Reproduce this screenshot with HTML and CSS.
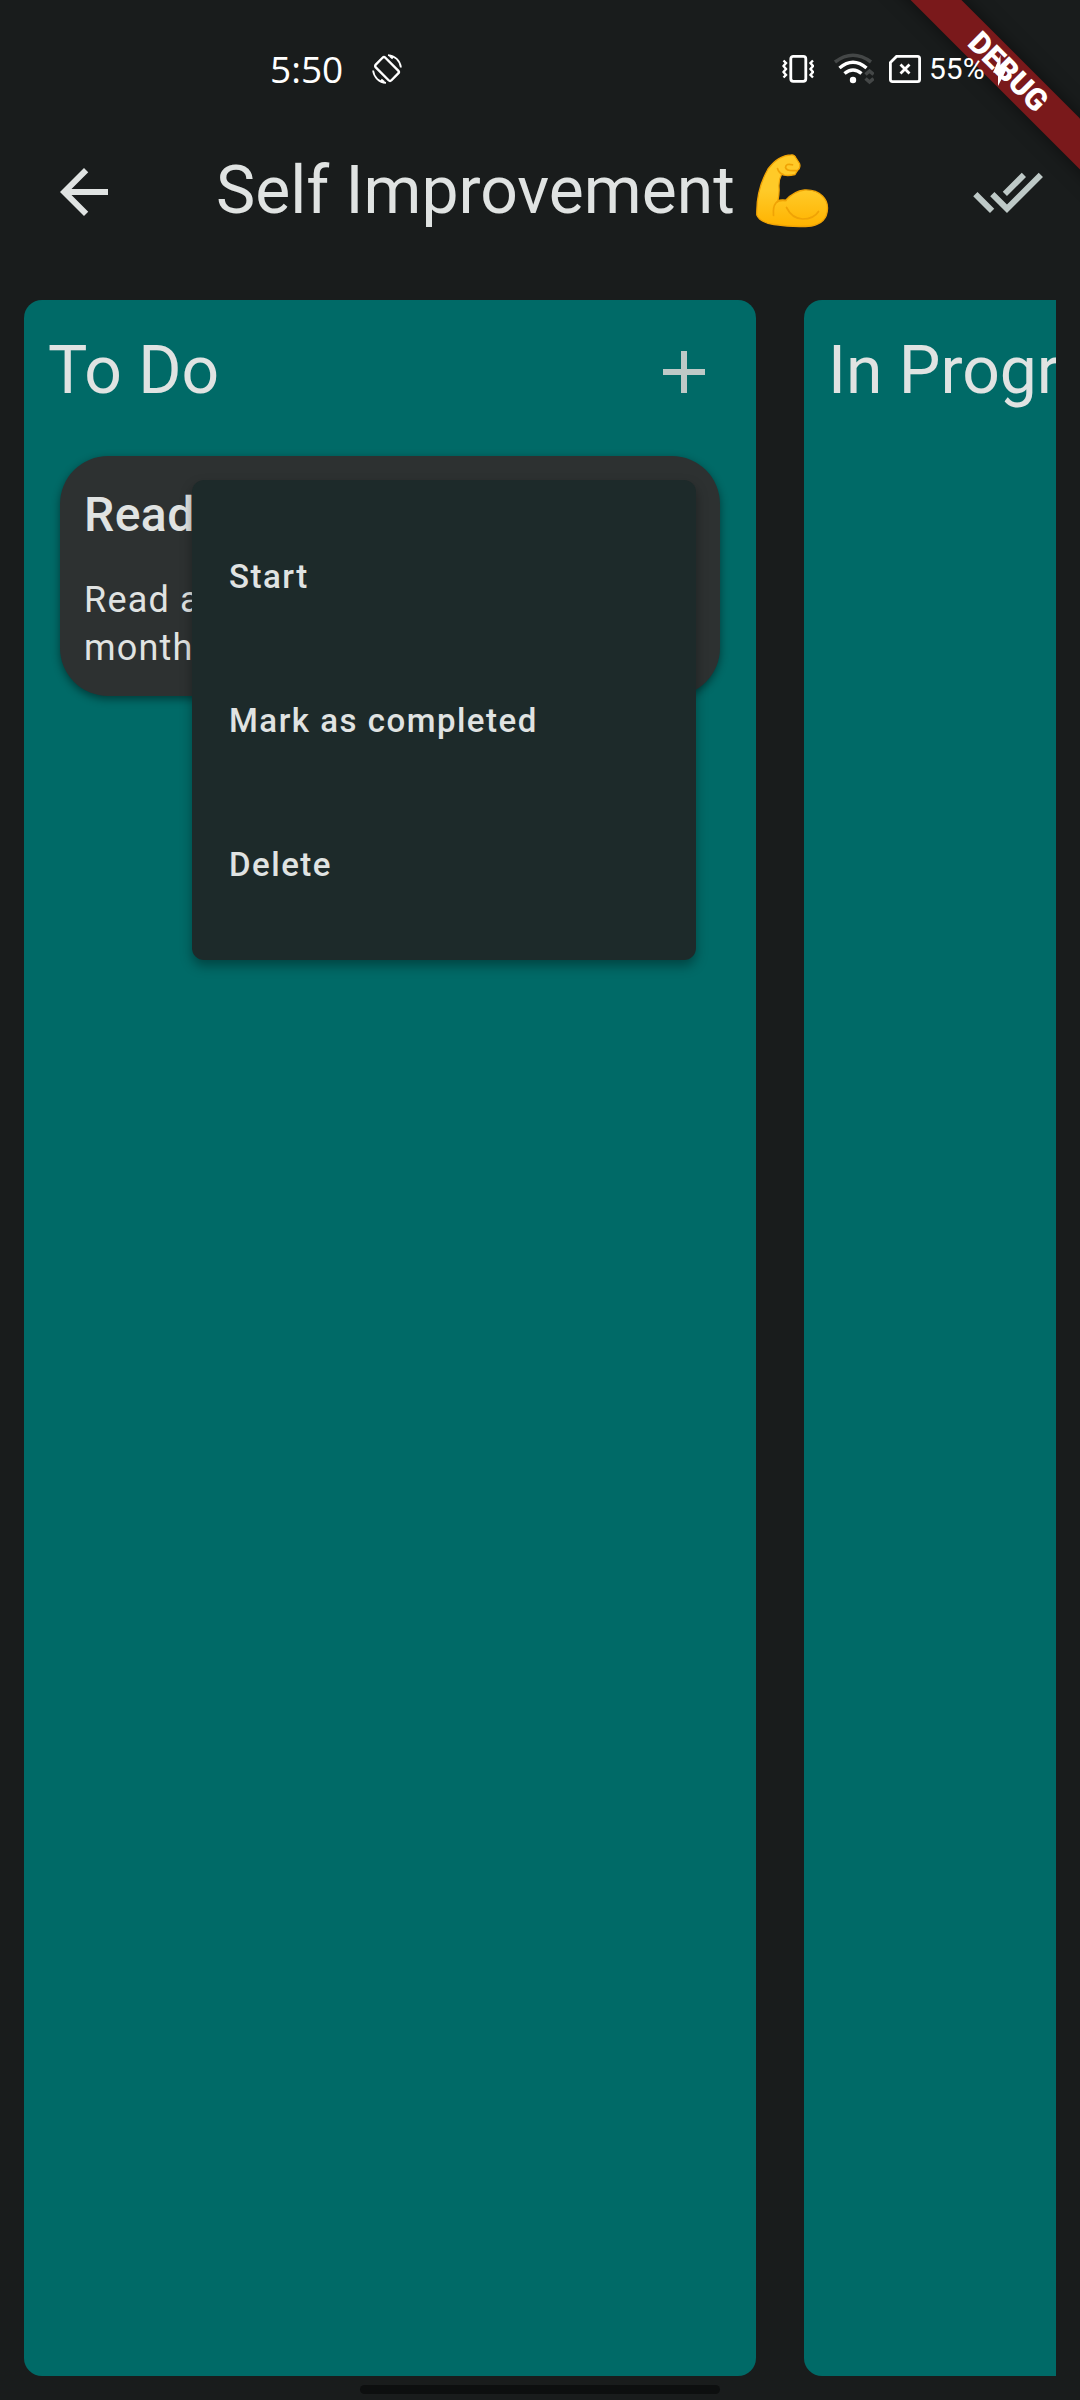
FILE: index.html
```html
<!DOCTYPE html>
<html lang="en">
<head>
<meta charset="utf-8">
<title>Self Improvement</title>
<link rel="stylesheet" href="styles.css">
</head>
<body>
<div class="screen">
  <div class="status-bar">
    <span class="clock">5:50</span>
    <svg class="rotate-icon" viewBox="0 0 30 30" width="30" height="30" fill="none" stroke="#fff">
      <rect x="3.900" y="8.200" width="22.200" height="13.600" rx="2" stroke-width="2.400" transform="rotate(45 15 15)"/>
      <path d="M16 1.100A13.900 13.900 0 0 1 28.900 13.500M14 28.900A13.900 13.900 0 0 1 1.100 16.500" stroke-width="1.800"/>
      <path d="M18 1.800l3 2.500M12 28.200l-3-2.500" stroke-width="2.600"/>
    </svg>
    <div class="status-right">
      <svg class="vibrate-icon" viewBox="0 0 32 30" width="32" height="30" fill="none" stroke="#fff" stroke-width="2.800">
        <rect x="8.800" y="2.300" width="15" height="25" rx="2.500"/>
        <path d="M1.500 6.500l2.500 2.500-2.500 3 2.500 3-2.500 3 2.500 3-2.500 2.500M31 6.500l-2.500 2.500 2.500 3-2.500 3 2.500 3-2.500 3 2.500 2.500" stroke-width="2.400"/>
      </svg>
      <svg class="wifi-icon" viewBox="0 0 40 32" width="40" height="32" fill="none" stroke-width="3.500">
        <path d="M1 9Q19 -4.500 37 9" stroke="#444747"/>
        <path d="M5.500 15Q19 3.500 32.500 15M10.500 20.500Q19 13.500 27.500 20.500" stroke="#fff"/>
        <circle cx="19" cy="27" r="3.200" fill="#fff"/>
        <path d="M31.500 21.500l4-3.500 4 3.500M31.500 25.500l4 3.500 4-3.500" stroke="#444747"/>
      </svg>
      <svg class="sim-icon" viewBox="0 0 32 28" width="32" height="28" fill="none" stroke="#fff" stroke-width="2.800">
        <path d="M7.500 1.400H28.500Q30.600 1.400 30.600 3.500V24.500Q30.600 26.600 28.500 26.600H3.500Q1.400 26.600 1.400 24.500V7.500Z"/>
        <path d="M11.500 9.500l9 9M20.500 9.500l-9 9"/>
      </svg>
      <span class="battery">55%</span>
    </div>
  </div>

  <header class="app-bar">
    <svg class="back" viewBox="0 0 24 24" width="72" height="72"><path fill="#e0e3e2" d="M20 11H7.830l5.590-5.590L12 4l-8 8 8 8 1.410-1.410L7.830 13H20v-2z"/></svg>
    <h1 class="title">Self Improvement
      <svg class="flex-arm" role="img" aria-label="Flexed biceps" viewBox="0 0 110 100" width="110" height="100">
        <defs><linearGradient id="skin" x1="0" y1="0" x2="0" y2="1"><stop offset=".5" stop-color="#ffca28"/><stop offset="1" stop-color="#ffb300"/></linearGradient></defs>
        <path d="M51.500 14.800Q54.500 14.500 56 18L59.500 23.500Q61 28 57.500 30.500L55 34.500Q47 36.500 41.500 34.500Q38.500 40 39 47.500Q39.500 53 38 60.500L45.500 60.500Q54 51 64.500 50Q76 49.500 82.500 56Q88 61.500 87.500 69Q87 83 71.500 86Q54 87.500 34 84.500Q20 82.500 16.800 75Q16 50 28 29Q38 15 51.500 14.800Z" fill="url(#skin)" stroke="#f0a305" stroke-width="1.300"/>
        <path d="M52.500 24.800Q46 23 45.500 27.500Q46.500 31.500 57 30.500M37.500 28.500Q39 33.500 43.500 34.500M46 60.500Q32 58 33.500 75.500M46.500 67.500Q52 78.500 62.500 79Q74 79 78.500 71.500" fill="none" stroke="#f0a305" stroke-width="1.700" stroke-linecap="round"/>
      </svg>
    </h1>
    <svg class="done-all" viewBox="0 0 24 24" width="72" height="72"><path fill="#bec9c7" d="M18 7l-1.410-1.410-6.340 6.340 1.410 1.410L18 7zm4.240-1.410L11.660 16.170 7.480 12l-1.410 1.410L11.660 19l12-12-1.420-1.410zM.410 13.410L6 19l1.410-1.410L1.830 12 .410 13.410z"/></svg>
  </header>

  <main class="board">
    <section class="column">
      <div class="column-head">
        <h2>To Do</h2>
        <svg viewBox="0 0 24 24" width="72" height="72"><path fill="#bec9c7" d="M19 13h-6v6h-2v-6H5v-2h6V5h2v6h6v2z"/></svg>
      </div>
      <article class="card">
        <h3>Read</h3>
        <p>Read a<br>month</p>
        <div class="menu">
          <div class="menu-item">Start</div>
          <div class="menu-item">Mark as completed</div>
          <div class="menu-item">Delete</div>
        </div>
      </article>
    </section>
    <section class="column">
      <div class="column-head"><h2>In Progress</h2></div>
    </section>
  </main>
  <div class="home-handle"></div>

  <div class="debug-corner">
    <div class="ribbon">DEBUG</div>
    <svg class="bolt" viewBox="0 0 16 32" width="16" height="32"><path d="M8.500 0L1 17.500H6V31L15 13.500H8.500Z" fill="#fff"/></svg>
  </div>
</div>
</body>
</html>
```

FILE: styles.css
```css
* { box-sizing: border-box; }

body {
  margin: 0;
  background: #191c1c;
  color: #e0e3e2;
  font-family: Roboto, sans-serif;
}

h1, h2, h3, p { margin: 0; font-weight: 400; }
svg { display: block; flex: none; }

.screen {
  position: relative;
  display: flex;
  flex-direction: column;
  width: 1080px;
  height: 2400px;
  overflow: hidden;
}

.status-bar {
  position: relative;
  z-index: 1;
  display: flex;
  align-items: center;
  height: 138px;
  padding-left: 270px;
  color: #fff;
}

.clock {
  width: 102px;
  padding-bottom: 2px;
  font-family: "Open Sans", sans-serif;
  font-size: 37px;
}

.status-right { display: flex; align-items: center; margin-left: 380px; }
.wifi-icon { margin-left: 20px; }
.sim-icon { margin-left: 15px; }
.battery { margin-left: 8px; padding-bottom: 1px; font-size: 30px; font-weight: 400; }

.app-bar {
  display: flex;
  align-items: center;
  height: 108px;
  padding: 0 36px 0 48px;
}

.title {
  display: flex;
  align-items: center;
  flex: 1;
  margin-left: 96px;
  padding-bottom: 3px;
  font-size: 66px;
  line-height: 84px;
  white-space: nowrap;
}

.flex-arm { margin: -10px 0 -8px 5px; }

.board {
  display: flex;
  gap: 48px;
  height: 2076px;
  margin: 54px 24px 0;
  overflow: hidden;
}

.column {
  flex: 0 0 732px;
  border-radius: 18px;
  background: #006a67;
}

.column-head {
  display: flex;
  align-items: center;
  justify-content: space-between;
  height: 144px;
  padding: 0 36px 0 24px;
}

.column-head h2 { padding-bottom: 2px; font-size: 66px; line-height: 84px; }

.card {
  position: relative;
  height: 240px;
  margin: 12px 36px;
  padding: 23px 24px 24px;
  border-radius: 48px;
  background: #2d3131;
  box-shadow: 0 3px 9px rgba(0, 0, 0, .45);
}

.card h3 { font-size: 48px; font-weight: 500; line-height: 72px; letter-spacing: .45px; }
.card p { margin-top: 25px; font-size: 36px; line-height: 48px; letter-spacing: 1.2px; }

.menu {
  position: absolute;
  top: 24px;
  left: 132px;
  width: 504px;
  padding: 24px 0;
  border-radius: 12px;
  background: #1d2a2a;
  box-shadow: 0 6px 12px rgba(0, 0, 0, .35);
}

.menu-item {
  display: flex;
  align-items: center;
  height: 144px;
  padding: 0 37px;
  font-size: 33px;
  font-weight: 500;
  letter-spacing: 1.5px;
}

.home-handle {
  width: 360px;
  height: 9px;
  margin: 9px auto 0;
  border-radius: 5px;
  background: #0d0f0f;
}

.debug-corner {
  position: absolute;
  top: 0;
  right: 0;
  width: 240px;
  height: 240px;
  overflow: hidden;
}

.ribbon {
  position: absolute;
  top: 54px;
  left: 18px;
  width: 300px;
  height: 36px;
  transform: rotate(45deg);
  background: #7a191b;
  box-shadow: 0 0 18px rgba(0, 0, 0, .5);
  color: #fff;
  font-size: 30.6px;
  font-weight: 900;
  line-height: 36px;
  text-align: center;
}

.bolt { position: absolute; top: 55px; left: 152px; }
```
